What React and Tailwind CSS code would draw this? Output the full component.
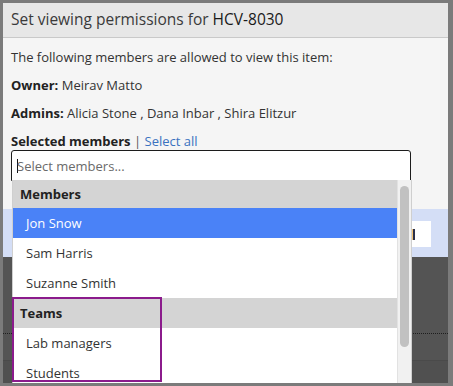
import React from "react";

const members = ["Jon Snow", "Sam Harris", "Suzanne Smith"];
const teams = ["Lab managers", "Students"];

const GroupHeader = ({ label, first }) => (
  <div
    className={`${first ? "h-[28px]" : "h-[30px]"} flex items-center bg-[#d4d4d4] pl-[7px] text-[13px] font-bold text-[#222]`}
  >
    {label}
  </div>
);

const Option = ({ label, active }) => (
  <div
    className={`h-[30px] flex items-center pl-[13px] text-[13px] ${
      active ? "bg-[#4a82f7] text-white" : "bg-white text-[#333]"
    }`}
  >
    {label}
  </div>
);

const MemberDropdown = () => (
  <div className="absolute left-0 top-full w-[400px] h-[210px] flex bg-white border-x border-[#cfcfcf]">
    <div className="flex-1 flex flex-col">
      <GroupHeader label="Members" first />
      {members.map((m, i) => (
        <Option key={m} label={m} active={i === 0} />
      ))}
      <GroupHeader label="Teams" />
      {teams.map((t) => (
        <Option key={t} label={t} />
      ))}
    </div>
    <div className="w-[14px] bg-[#f1f1f1] border-l border-[#e2e2e2] pt-[6px] flex justify-center">
      <div className="w-[9px] h-[161px] rounded-full bg-[#c1c1c1]" />
    </div>
    {/* highlight around the Teams group */}
    <div className="absolute left-[-1px] top-[117px] w-[150px] h-[85px] border-2 border-[#8b1b8c]" />
  </div>
);

export default function App() {
  return (
    <div className="w-[453px] h-[386px] bg-[#7b7b7b] pt-[3px] pl-[3px] pr-[5px] pb-[3px] font-['Open_Sans','Liberation_Sans',sans-serif]">
      <div className="relative h-full overflow-hidden flex flex-col bg-[#545454]">
        <div className="h-[35px] shrink-0 flex items-center bg-[#e7e7e7] border-b border-[#c9c9c9] px-[8px] text-[15.5px] text-[#3a3a3a]">
          <span>
            Set viewing permissions for <span className="font-medium text-[#1a1a1a]">HCV-8030</span>
          </span>
        </div>

        <div className="h-[171px] shrink-0 bg-[#f5f5f5] px-[8px] pt-[10px] flex flex-col gap-[10px] text-[13px] leading-[18px] text-[#333]">
          <p>The following members are allowed to view this item:</p>
          <p>
            <span className="font-bold text-[#222]">Owner:</span> Meirav Matto
          </p>
          <p>
            <span className="font-bold text-[#222]">Admins:</span> Alicia Stone , Dana Inbar , Shira Elitzur
          </p>
          <div className="relative z-10">
            <p>
              <span className="font-bold text-[#222]">Selected members</span>
              <span className="text-[#555]"> | </span>
              <span className="text-[#3a72c0]">Select all</span>
            </p>
            <div className="relative w-[400px] h-[31px] bg-white border border-[#1c1c1c] rounded-t-[3px] flex items-center pl-[5px] text-[13px] text-[#6a6a6a]">
              <span className="w-px h-[14px] bg-[#111] mr-[-1px]" />
              <span>Select members...</span>
              <MemberDropdown />
            </div>
          </div>
        </div>

        <div className="h-[48px] shrink-0 bg-[#d4def6] flex justify-end items-start pt-[12px] pr-[17px]">
          <div className="w-[20px] h-[26px] bg-white flex items-center pl-[2px]">
            <span className="w-[2px] h-[11px] bg-[#2a2f4a] shadow-[-1px_0_0_#f0c070]" />
          </div>
        </div>

        <div className="flex-1 flex flex-col">
          <div className="h-[77px] border-b border-dotted border-[#1e1e1e]" />
          <div className="h-[27px] border-b border-[#4a4a4a]" />
          <div className="flex-1 bg-[#505050]" />
        </div>
      </div>
    </div>
  );
}
